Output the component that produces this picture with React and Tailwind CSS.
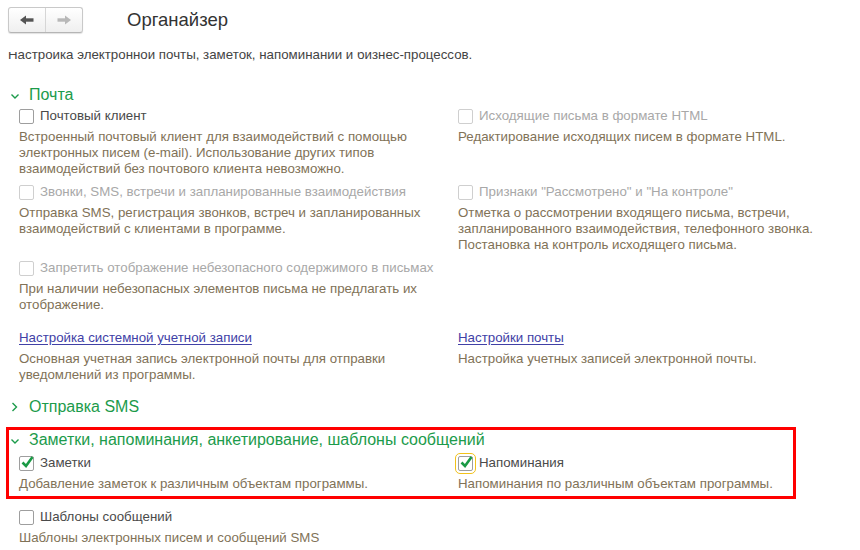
import React from 'react';

const DESC = 'text-[#817257]';
const GREEN = '#1c9b4b';

function Chevron({ open }) {
  return (
    <svg width="19" height="20" viewBox="0 0 19 20" className="shrink-0">
      {open ? (
        <path d="M1.5 9.5 L5 13 L8.5 9.5" fill="none" stroke={GREEN} strokeWidth="1.4" />
      ) : (
        <path d="M2.5 6 L6.5 10 L2.5 14" fill="none" stroke={GREEN} strokeWidth="1.4" />
      )}
    </svg>
  );
}

function GroupHeader({ open, title, className = '' }) {
  return (
    <div className={`flex items-center h-[20px] ${className}`}>
      <Chevron open={open} />
      <span className="text-[16px] leading-[20px] text-[#1c9b4b] whitespace-nowrap">{title}</span>
    </div>
  );
}

function Box({ checked, disabled, focused }) {
  return (
    <span
      className={`relative w-[15px] h-[15px] shrink-0 rounded-[2px] border bg-white ${
        disabled ? 'border-[#cfcfcf]' : 'border-[#9e9e9e]'
      } ${focused ? 'outline outline-1 outline-[#f2c21b] outline-offset-2' : ''}`}
    >
      {checked && (
        <svg width="16" height="16" viewBox="0 0 16 16" className="absolute left-[0px] top-[-3px]">
          <path d="M2.5 8.5 L6 12 L12.5 3" fill="none" stroke="#1a9a45" strokeWidth="2.6" />
        </svg>
      )}
    </span>
  );
}

function Desc({ lines }) {
  return (
    <div className={`mt-[3px] text-[13.3px] leading-[16px] ${DESC} whitespace-nowrap`}>
      {lines.map((l, i) => (
        <div key={i}>{l}</div>
      ))}
    </div>
  );
}

function CheckItem({ label, desc, checked, disabled, focused }) {
  return (
    <div>
      <div className="flex items-center h-[20px]">
        <Box checked={checked} disabled={disabled} focused={focused} />
        <span className={`ml-[6px] text-[13.3px] whitespace-nowrap ${disabled ? 'text-[#a8a8a8]' : 'text-[#4a4a4a]'}`}>
          {label}
        </span>
      </div>
      <Desc lines={desc} />
    </div>
  );
}

function LinkItem({ label, desc }) {
  return (
    <div>
      <div className="flex items-center h-[20px]">
        <a href="#" className="text-[13.3px] text-[#4141a6] underline underline-offset-2 whitespace-nowrap">
          {label}
        </a>
      </div>
      <Desc lines={desc} />
    </div>
  );
}

function Row({ left, right, className = '' }) {
  return (
    <div className={`grid grid-cols-[439px_1fr] pl-[9px] ${className}`}>
      <div>{left}</div>
      <div>{right}</div>
    </div>
  );
}

function NavButtons() {
  return (
    <div className="flex h-[26px] w-[75px] rounded-[3px] border border-[#c9c9c9] border-b-[#b5b5b5] bg-linear-to-b from-white to-[#efefef] shadow-[0_1px_1px_rgba(0,0,0,0.12)]">
      <button className="flex-1 flex items-center justify-center border-r border-[#d6d6d6]">
        <svg width="14" height="10" viewBox="0 0 14 10">
          <path d="M0 5 L6 0.5 L6 9.5 Z" fill="#555" />
          <rect x="5" y="3.3" width="8.5" height="3.4" fill="#555" />
        </svg>
      </button>
      <button className="flex-1 flex items-center justify-center">
        <svg width="14" height="10" viewBox="0 0 14 10">
          <path d="M14 5 L8 0.5 L8 9.5 Z" fill="#b8b8b8" />
          <rect x="0.5" y="3.3" width="8.5" height="3.4" fill="#b8b8b8" />
        </svg>
      </button>
    </div>
  );
}

export default function App() {
  return (
    <div className="w-[860px] h-[550px] overflow-hidden bg-white flex flex-col font-['Liberation_Sans',Arial,sans-serif]">
      {/* Header */}
      <div className="h-[52px] shrink-0 flex items-start pl-[8px]">
        <div className="mt-[7px]">
          <NavButtons />
        </div>
        <h1 className="ml-[44px] mt-[8px] text-[18.5px] leading-[24px] text-[#333]">Органайзер</h1>
      </div>

      {/* Scrolled content: the description line is partly hidden under the header */}
      <div className="flex-1 overflow-hidden">
        <div className="mt-[-5px] pl-[8px] text-[13.3px] leading-[16px] text-[#444] whitespace-nowrap">
          Настройка электронной почты, заметок, напоминаний и бизнес-процессов.
        </div>

        <div className="pl-[10px]">
          <GroupHeader open title="Почта" className="mt-[22px]" />

          <Row
            className="mt-[1px]"
            left={
              <CheckItem
                label="Почтовый клиент"
                desc={[
                  'Встроенный почтовый клиент для взаимодействий с помощью',
                  'электронных писем (e-mail). Использование других типов',
                  'взаимодействий без почтового клиента невозможно.',
                ]}
              />
            }
            right={
              <CheckItem
                disabled
                label="Исходящие письма в формате HTML"
                desc={['Редактирование исходящих писем в формате HTML.']}
              />
            }
          />

          <Row
            className="mt-[5px]"
            left={
              <CheckItem
                disabled
                label="Звонки, SMS, встречи и запланированные взаимодействия"
                desc={[
                  'Отправка SMS, регистрация звонков, встреч и запланированных',
                  'взаимодействий с клиентами в программе.',
                ]}
              />
            }
            right={
              <CheckItem
                disabled
                label={'Признаки "Рассмотрено" и "На контроле"'}
                desc={[
                  'Отметка о рассмотрении входящего письма, встречи,',
                  'запланированного взаимодействия, телефонного звонка.',
                  'Постановка на контроль исходящего письма.',
                ]}
              />
            }
          />

          <Row
            className="mt-[5px]"
            left={
              <CheckItem
                disabled
                label="Запретить отображение небезопасного содержимого в письмах"
                desc={[
                  'При наличии небезопасных элементов письма не предлагать их',
                  'отображение.',
                ]}
              />
            }
          />

          <Row
            className="mt-[15px]"
            left={
              <LinkItem
                label="Настройка системной учетной записи"
                desc={[
                  'Основная учетная запись электронной почты для отправки',
                  'уведомлений из программы.',
                ]}
              />
            }
            right={
              <LinkItem label="Настройки почты" desc={['Настройка учетных записей электронной почты.']} />
            }
          />

          <GroupHeader title="Отправка SMS" className="mt-[14px]" />

          {/* highlighted group */}
          <div className="mt-[10px] ml-[-4px] w-[790px] border-[3px] border-[#ff0000] pl-[1px] pb-[4px]">
            <GroupHeader open title="Заметки, напоминания, анкетирование, шаблоны сообщений" />
            <Row
              className="mt-[3px]"
              left={
                <CheckItem checked label="Заметки" desc={['Добавление заметок к различным объектам программы.']} />
              }
              right={
                <CheckItem
                  checked
                  focused
                  label="Напоминания"
                  desc={['Напоминания по различным объектам программы.']}
                />
              }
            />
          </div>

          <Row
            className="mt-[8px]"
            left={
              <CheckItem label="Шаблоны сообщений" desc={['Шаблоны электронных писем и сообщений SMS']} />
            }
          />
        </div>
      </div>
    </div>
  );
}
